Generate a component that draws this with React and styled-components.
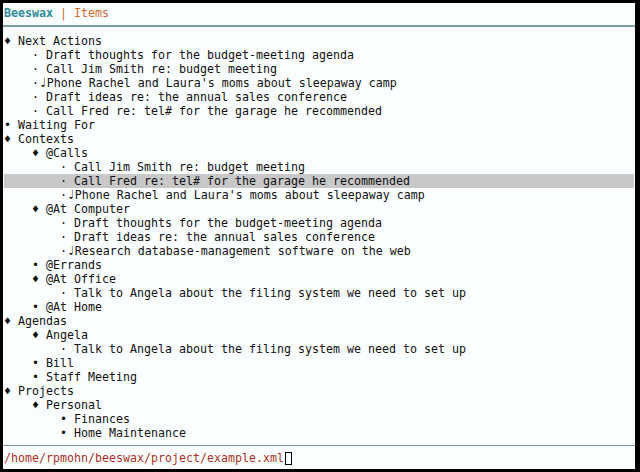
import { createGlobalStyle, styled } from "styled-components";

const GlobalStyle = createGlobalStyle`
    html, body {
        margin: 0;
        padding: 0;
        background: #000;
    }
    body {
        width: 640px;
        height: 472px;
        overflow: hidden;
    }
`;

const Screen = styled.div`
    margin: 3px 0 0 3px;
    width: 632px;
    height: 466px;
    background: #fbfefe;
    display: flex;
    flex-direction: column;
    font-family: "DejaVu Sans Mono", "Liberation Mono", monospace;
    font-size: 11.63px;
    line-height: 14px;
    color: #111;
`;

const Header = styled.div`
    display: flex;
    height: 14px;
    padding: 3px 0 0 1px;
    white-space: pre;
`;

const AppName = styled.span`
    color: #2f8a9c;
    font-weight: bold;
`;

const ViewName = styled.span`
    color: #cc6a2c;
`;

const Rule = styled.div`
    height: 0;
    border-bottom: ${(p) => p.$weight}px solid #7d9e9e;
    margin-top: ${(p) => p.$top}px;
`;

const Outline = styled.div`
    padding: 7px 0 0 1px;
    display: flex;
    flex-direction: column;
`;

const Row = styled.div`
    display: flex;
    height: 14px;
    margin-right: 1px;
    padding-left: ${(p) => p.$level * 4}ch;
    white-space: pre;
    background: ${(p) => (p.$selected ? "#c8c8c8" : "transparent")};
`;

const Cell = styled.span`
    width: 1ch;
    flex: none;
    text-align: center;
    overflow: visible;
`;

const Note = styled(Cell)`
    font-size: 13px;
    font-weight: bold;
`;

const Status = styled.div`
    display: flex;
    align-items: center;
    height: 14px;
    padding: 5px 0 0 1px;
    color: #a8321e;
    white-space: pre;
`;

const Cursor = styled.span`
    display: inline-block;
    width: 7px;
    height: 13px;
    border: 1px solid #000;
    box-sizing: border-box;
    margin-left: 1px;
`;

const MARK = { open: "♦", leaf: "•", item: "·" };

const lines = [
    [0, "open", "Next Actions"],
    [1, "item", "Draft thoughts for the budget-meeting agenda"],
    [1, "item", "Call Jim Smith re: budget meeting"],
    [1, "item", "Phone Rachel and Laura's moms about sleepaway camp", true],
    [1, "item", "Draft ideas re: the annual sales conference"],
    [1, "item", "Call Fred re: tel# for the garage he recommended"],
    [0, "leaf", "Waiting For"],
    [0, "open", "Contexts"],
    [1, "open", "@Calls"],
    [2, "item", "Call Jim Smith re: budget meeting"],
    [2, "item", "Call Fred re: tel# for the garage he recommended", false, true],
    [2, "item", "Phone Rachel and Laura's moms about sleepaway camp", true],
    [1, "open", "@At Computer"],
    [2, "item", "Draft thoughts for the budget-meeting agenda"],
    [2, "item", "Draft ideas re: the annual sales conference"],
    [2, "item", "Research database-management software on the web", true],
    [1, "leaf", "@Errands"],
    [1, "open", "@At Office"],
    [2, "item", "Talk to Angela about the filing system we need to set up"],
    [1, "leaf", "@At Home"],
    [0, "open", "Agendas"],
    [1, "open", "Angela"],
    [2, "item", "Talk to Angela about the filing system we need to set up"],
    [1, "leaf", "Bill"],
    [1, "leaf", "Staff Meeting"],
    [0, "open", "Projects"],
    [1, "open", "Personal"],
    [2, "leaf", "Finances"],
    [2, "leaf", "Home Maintenance"],
];

export default function App() {
    return (
        <>
            <GlobalStyle />
            <Screen>
                <Header>
                    <AppName>Beeswax</AppName>
                    <ViewName> | Items</ViewName>
                </Header>
                <Rule $top={5} $weight={2} />
                <Outline>
                    {lines.map(([level, kind, text, note, selected], i) => (
                        <Row key={i} $level={level} $selected={selected}>
                            <Cell>{MARK[kind]}</Cell>
                            {note ? <Note>♩</Note> : <Cell> </Cell>}
                            <span>{text}</span>
                        </Row>
                    ))}
                </Outline>
                <Rule $top={5} $weight={1} />
                <Status>
                    /home/rpmohn/beeswax/project/example.xml
                    <Cursor />
                </Status>
            </Screen>
        </>
    );
}
